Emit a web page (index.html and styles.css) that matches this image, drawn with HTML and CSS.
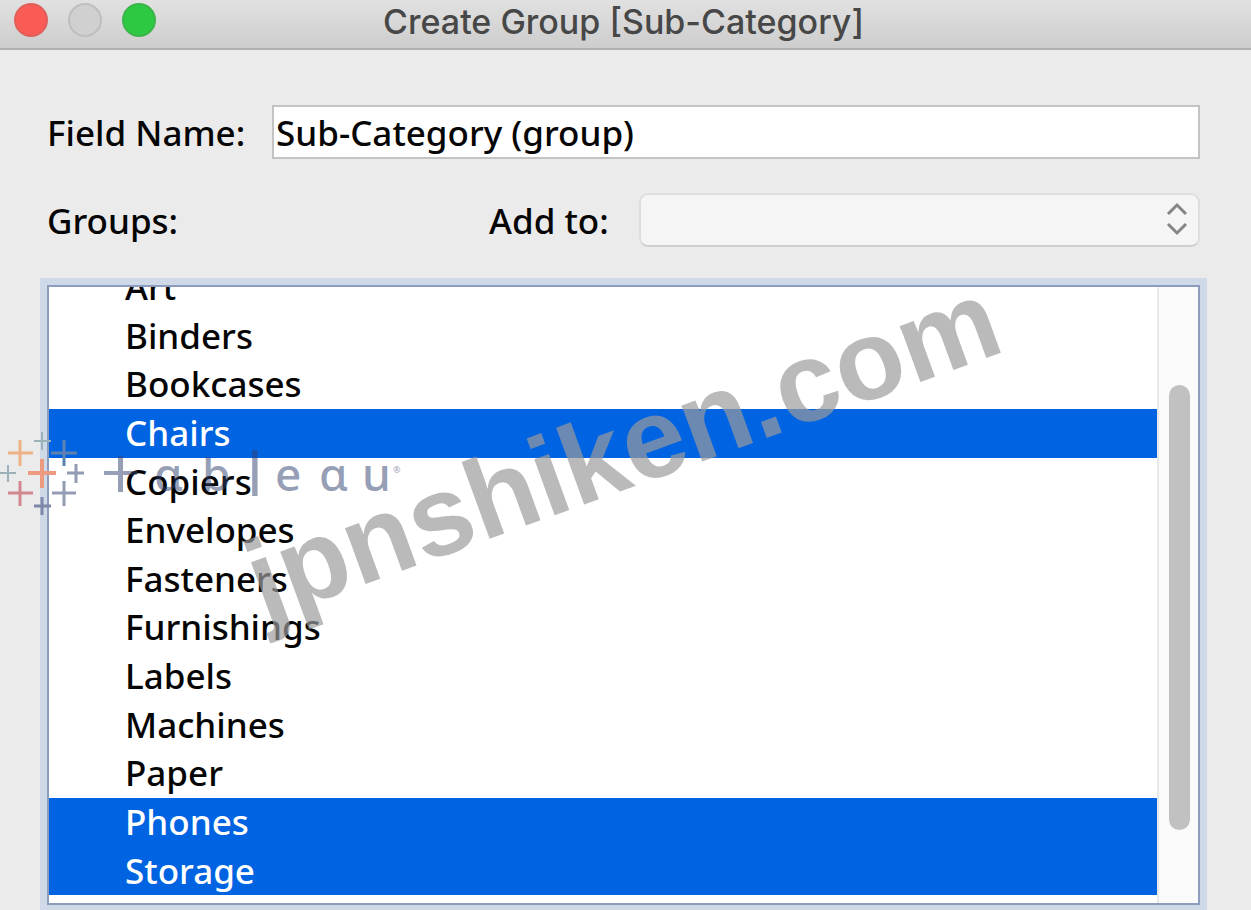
FILE: index.html
```html
<!DOCTYPE html>
<html lang="en">
<head>
<meta charset="utf-8">
<title>Create Group [Sub-Category]</title>
<link rel="stylesheet" href="styles.css">
</head>
<body>
<main class="window">
  <header class="titlebar">
    <div class="lights">
      <button class="light light-close" type="button" aria-label="Close"></button>
      <button class="light light-min" type="button" aria-label="Minimize" disabled></button>
      <button class="light light-zoom" type="button" aria-label="Zoom"></button>
    </div>
    <h1 class="title">Create Group [Sub-Category]</h1>
  </header>
  <form class="form">
    <div class="row">
      <label class="name-label" for="field-name">Field Name:</label>
      <input class="name-input" id="field-name" type="text" value="Sub-Category (group)">
    </div>
    <div class="row">
      <span class="groups-label" id="groups-label">Groups:</span>
      <label class="add-label" for="add-to">Add to:</label>
      <div class="select-box">
        <select class="add-select" id="add-to"><option></option></select>
        <svg class="chevrons" viewBox="0 0 22 34" aria-hidden="true"><path d="M2 12 11 3l9 9M2 22l9 9 9-9"/></svg>
      </div>
    </div>
    <div class="listbox">
      <ul class="items" role="listbox" aria-multiselectable="true" aria-labelledby="groups-label">
        <li class="item" role="option">Art</li>
        <li class="item" role="option">Binders</li>
        <li class="item" role="option">Bookcases</li>
        <li class="item selected" role="option" aria-selected="true">Chairs</li>
        <li class="item" role="option">Copiers</li>
        <li class="item" role="option">Envelopes</li>
        <li class="item" role="option">Fasteners</li>
        <li class="item" role="option">Furnishings</li>
        <li class="item" role="option">Labels</li>
        <li class="item" role="option">Machines</li>
        <li class="item" role="option">Paper</li>
        <li class="item selected" role="option" aria-selected="true">Phones</li>
        <li class="item selected" role="option" aria-selected="true">Storage</li>
      </ul>
      <div class="track"><div class="thumb"></div></div>
    </div>
  </form>
  <svg class="logo" viewBox="0 430 410 90" role="img" aria-label="tableau">
    <g fill="none">
      <path stroke="#ec9b80" stroke-width="4" d="M28 473h28M42 459v29"/>
      <path stroke="#edb287" stroke-width="3" d="M8 453h25M20 440v26"/>
      <path stroke="#d18790" stroke-width="3" d="M8 493h25M20 481v25"/>
      <path stroke="#9bb3b8" stroke-width="2" d="M0 473h16M8 465v17M34 441h17M42 432v18"/>
      <path stroke="#5f83b0" stroke-width="3" d="M51 453h26M64 440v26"/>
      <path stroke="#939bb5" stroke-width="3" d="M52 493h24M64 481v25M67 473h17M76 464v19"/>
      <path stroke="#7f88a8" stroke-width="3" d="M34 506h17M42 497v18"/>
    </g>
    <g class="wordmark">
      <path d="M104 471h14v-15h5v15h14v4h-14v17h-5v-17h-14z"/>
      <text x="154" y="491">ɑ</text>
      <text x="202" y="491">b</text>
      <text class="tall" x="247" y="496">l</text>
      <text x="275" y="491">e</text>
      <text x="319" y="491">ɑ</text>
      <text x="362" y="491">u</text>
      <text class="mark" x="393" y="473">®</text>
    </g>
  </svg>
  <svg class="watermark" viewBox="0 0 1251 910"><text transform="translate(264 621) rotate(-20)">jpnshiken.com</text></svg>
</main>
</body>
</html>
```
FILE: styles.css
```css
* { box-sizing: border-box; }
body {
  margin: 0;
  background: #ebebeb;
  color: #050505;
  font: 500 35px/49px "Noto Sans", "Open Sans", sans-serif;
}
.window {
  position: relative;
  display: flex;
  flex-direction: column;
  height: 100vh;
  overflow: hidden;
}
.titlebar {
  display: grid;
  grid-template-columns: 1fr auto 1fr;
  align-items: center;
  height: 50px;
  padding: 0 18px 4px 14px;
  background: linear-gradient(#e1e1e1, #cdcdcd);
  border-bottom: 2px solid #b0b0b0;
}
.lights { display: flex; gap: 20px; padding-bottom: 4px; }
.light {
  width: 34px;
  height: 34px;
  padding: 0;
  border: 2px solid;
  border-radius: 50%;
}
.light-close { background: #fb5b55; border-color: #e0605c; }
.light-min { background: #d0d0d0; border-color: #bfbfbf; }
.light-zoom { background: #2dc943; border-color: #3bb54a; }
.title {
  margin: 0;
  color: #474747;
  font: 500 34px/44px Inter, Roboto, sans-serif;
}
.form {
  flex: 1;
  display: flex;
  flex-direction: column;
  min-height: 0;
  padding: 55px 51px 5px 47px;
}
.row {
  display: flex;
  align-items: center;
  height: 54px;
  margin-bottom: 34px;
}
.name-label { flex: 0 0 225px; }
.name-input {
  flex: 1;
  min-width: 0;
  height: 54px;
  padding: 0 2px;
  border: 2px solid #c3c3c3;
  background: #fff;
  color: inherit;
  font: inherit;
}
.groups-label { flex: 0 0 442px; }
.add-label { flex: 0 0 150px; }
.select-box { position: relative; flex: 1; height: 54px; }
.add-select {
  width: 100%;
  height: 100%;
  appearance: none;
  border: 2px solid #dedede;
  border-bottom-color: #cfcfcf;
  border-radius: 9px;
  background: #f5f5f5;
  font: inherit;
}
.chevrons {
  position: absolute;
  top: 9px;
  right: 12px;
  width: 22px;
  height: 34px;
  fill: none;
  stroke: #858585;
  stroke-width: 3;
  pointer-events: none;
}
.listbox {
  flex: 1;
  display: flex;
  min-height: 0;
  margin-top: 4px;
  overflow: hidden;
  border: 2px solid #8b9cbc;
  background: #fff;
  box-shadow: 0 0 0 7px #cfd9e8;
}
.items {
  flex: 1;
  margin: -24px 0 0;
  padding: 0;
  list-style: none;
  line-height: 1.39;
}
.item { padding-left: 76px; }
.selected { background: #0063e1; color: #fff; }
.track {
  width: 41px;
  padding: 98px 8px 73px 10px;
  background: #fafafa;
  border-left: 2px solid #e8e8e8;
}
.thumb { height: 100%; border-radius: 11px; background: #c1c1c1; }
.logo {
  position: absolute;
  top: 430px;
  left: 0;
  width: 410px;
  height: 90px;
}
.wordmark {
  fill: rgba(48, 64, 110, .5);
  font: 500 46px "Noto Sans", sans-serif;
}
.tall { font-size: 61px; font-weight: 400; }
.mark { font-size: 9px; }
.watermark {
  position: absolute;
  top: 0;
  left: 0;
  width: 1251px;
  height: 910px;
  fill: rgba(155, 155, 155, .69);
  font: bold 113px "Liberation Sans", Arial, sans-serif;
  pointer-events: none;
}
```
